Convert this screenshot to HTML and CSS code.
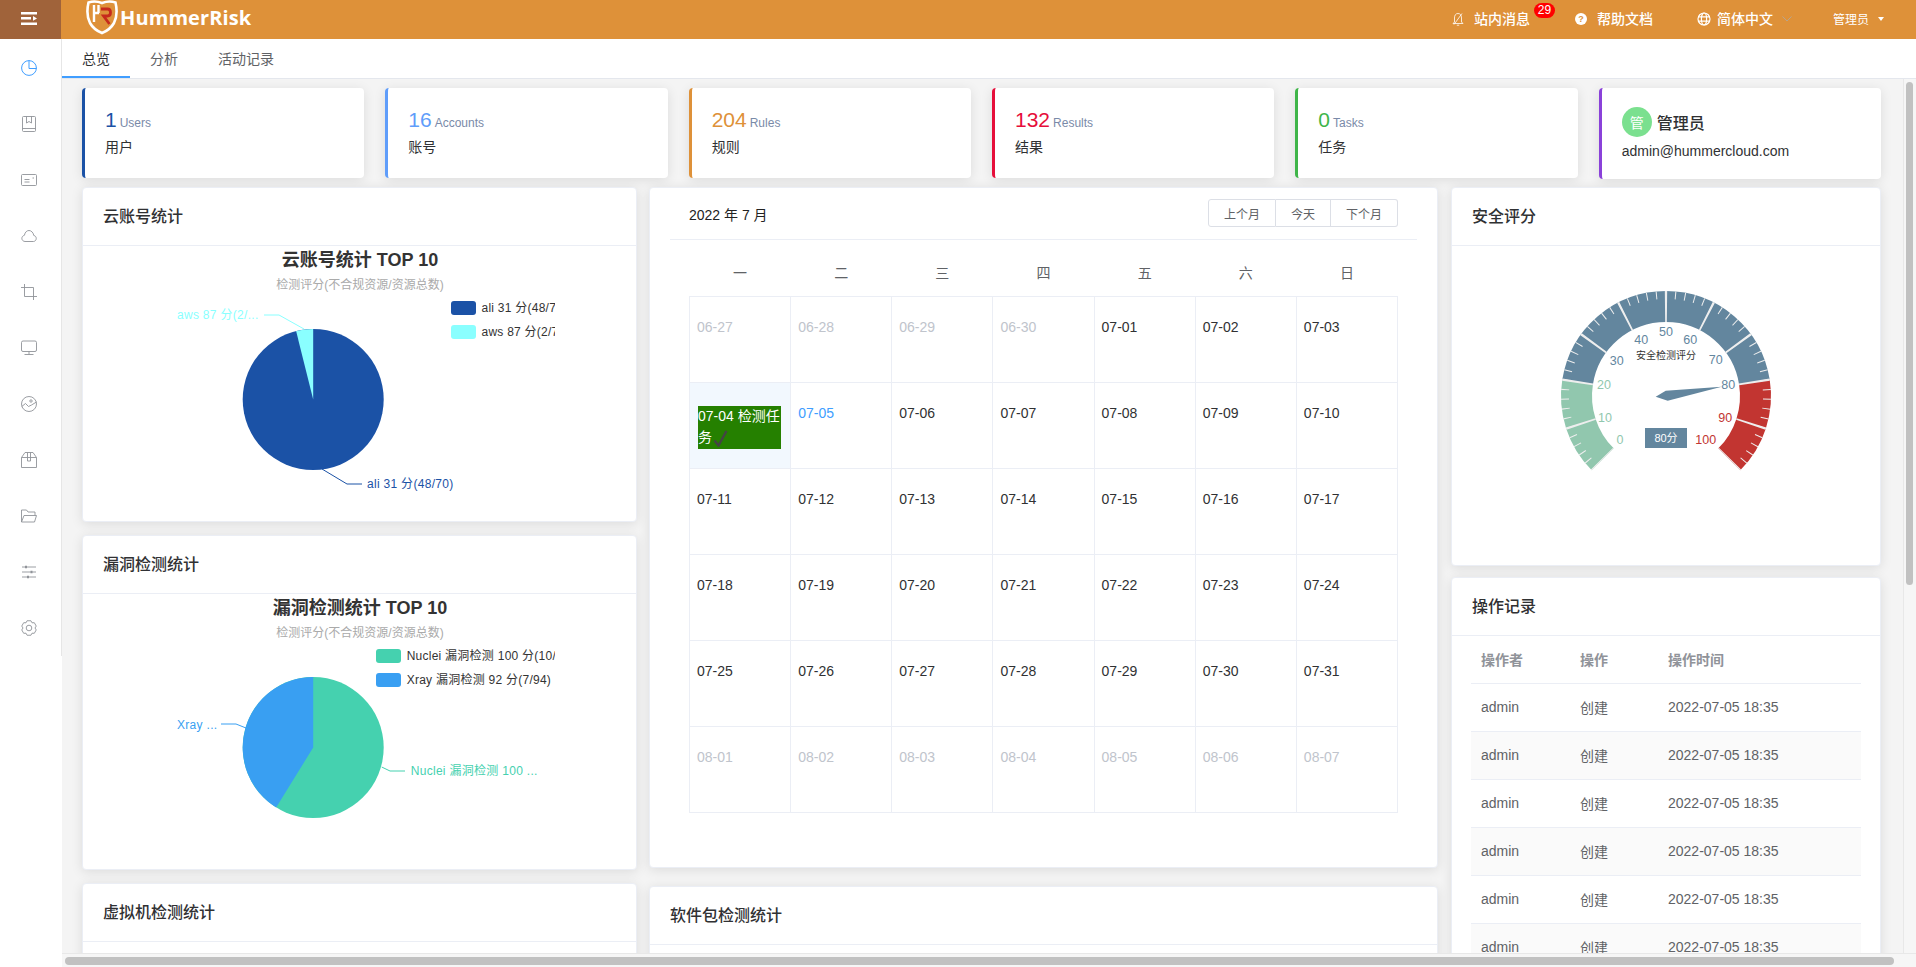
FILE: index.html
```html
<!DOCTYPE html>
<html lang="zh">
<head>
<meta charset="utf-8">
<title>HummerRisk</title>
<link rel="stylesheet" href="styles.css">
</head>
<body>
<header class="topbar">
  <div class="toggle">
    <svg class="toggle-ico" viewBox="0 0 16 13"><path d="M0 0h16v2.500H0zM0 5h10v2.500H0zM0 10.500h16V13H0zM12 4l4 2.400-4 2.400z"/></svg>
  </div>
  <svg class="logo" viewBox="0 0 32 35">
    <path class="logo-w" d="M16 3C12 1.500 7 1 2.500 2.500 1 9 1 17 4 23c2.500 4.500 7 8 12 10 5-2 9.500-5.500 12-10 3-6 3-14 1.500-20.500C25 1 20 1.500 16 3z"/>
    <path class="logo-w logo-h" d="M8 5v17M8 13h5M12.500 5v8"/>
    <path class="logo-r" d="M15 9h6.500c4 0 4 7 0 7h-4l6 8"/>
  </svg>
  <div class="brand">HummerRisk</div>
  <nav class="topnav">
    <span class="nav-item nav-msg">
      <svg class="nav-ico" viewBox="0 0 12 14"><path d="M6 1.500C3.500 1.500 2.500 3.500 2.500 6v4L1 11.500h10L9.500 10V6C9.500 3.500 8.500 1.500 6 1.500zM4.800 13.200h2.400M10 1.500 2 12.500"/></svg>
      <span class="nav-text">站内消息<span class="badge">29</span></span>
    </span>
    <span class="nav-item nav-help">
      <svg class="nav-solid" viewBox="0 0 12 12"><circle cx="6" cy="6" r="6"/><text class="q-mark" x="6" y="9.300">?</text></svg>
      <span class="nav-text">帮助文档</span>
    </span>
    <span class="nav-item nav-lang">
      <svg class="nav-globe" viewBox="0 0 14 14"><circle cx="7" cy="7" r="6"/><ellipse cx="7" cy="7" rx="2.600" ry="6"/><path d="M1 4.800h12M1 9.200h12"/></svg>
      <span class="nav-text">简体中文</span>
      <svg class="nav-chev" viewBox="0 0 10 6"><path d="M.5.500 5 5 9.500.500"/></svg>
    </span>
    <span class="nav-user">管理员<i class="caret"></i></span>
  </nav>
</header>

<div class="shell">
  <aside class="sidebar">
    <div class="menu-item active"><svg class="ico" viewBox="0 0 16 16"><circle cx="8" cy="8" r="7.400"/><path d="M8 .6V8.500H15.400"/></svg></div>
    <div class="menu-item"><svg class="ico" viewBox="0 0 16 16"><rect x="1.500" y=".5" width="13" height="15" rx="1"/><path d="M1.500 12.500h13M5.500.5v6.500L8 5.500 10.500 7V.5"/></svg></div>
    <div class="menu-item"><svg class="ico" viewBox="0 0 16 16"><rect x=".5" y="2.500" width="15" height="11" rx="1"/><path d="M3.500 7.500h5M3.500 10h5M11.500 6h1.500"/></svg></div>
    <div class="menu-item"><svg class="ico" viewBox="0 0 16 16"><path d="M4 13.500h8.500c3.500-.3 3.700-5.500.3-6C12.300 4.300 10 2.500 8 2.500S4 4 3.400 7.300C-.3 8.200.2 13.300 4 13.500z"/></svg></div>
    <div class="menu-item"><svg class="ico" viewBox="0 0 16 16"><path d="M3.500 0v12.500H16M0 3.500h12.500V16"/></svg></div>
    <div class="menu-item"><svg class="ico" viewBox="0 0 16 16"><rect x=".5" y="1" width="15" height="10.500" rx="1.500"/><path d="M8 11.500v3M3.500 14.500h9"/></svg></div>
    <div class="menu-item"><svg class="ico" viewBox="0 0 16 16"><circle cx="8" cy="8" r="7.500"/><path d="M.8 10.500 4.500 7.500 7.500 10.500 10.500 9 15.500 6"/><circle cx="10" cy="5" r="1.200"/></svg></div>
    <div class="menu-item"><svg class="ico" viewBox="0 0 16 16"><path d="M.5 5.500 4 .5h8l3.500 5v10H.5zM.5 5.500h15M6.500.5v8.500h3V.5"/></svg></div>
    <div class="menu-item"><svg class="ico" viewBox="0 0 16 16"><path d="M.5 14V2h5l1.500 2h7v3.500M.5 14 3 7.500h12.500L13.500 14z"/></svg></div>
    <div class="menu-item"><svg class="ico" viewBox="0 0 16 16"><path d="M1 3h14M1 8h14M1 13h14"/><path class="knob" d="M4 1.800h2v2.400H4zM9.500 6.800h2v2.400h-2zM6 11.800h2v2.400H6z"/></svg></div>
    <div class="menu-item"><svg class="ico" viewBox="0 0 16 16"><path d="M9.940.76H6.060L5 2.800 2.700 2.700.76 6.060 2 8 .76 9.940 2.700 13.300 5 13.200 6.060 15.240H9.940L11 13.200 13.300 13.300 15.240 9.940 14 8 15.240 6.060 13.300 2.700 11 2.800z"/><circle cx="8" cy="8" r="2.800"/></svg></div>
  </aside>

  <main class="main">
    <div class="tabs">
      <span class="tab tab-active">总览</span>
      <span class="tab">分析</span>
      <span class="tab">活动记录</span>
    </div>
    <div class="content">
      <section class="stats">
        <div class="stat c-navy"><div class="stat-line"><span class="num">1</span><span class="unit">Users</span></div><div class="stat-name">用户</div></div>
        <div class="stat c-blue"><div class="stat-line"><span class="num">16</span><span class="unit">Accounts</span></div><div class="stat-name">账号</div></div>
        <div class="stat c-orange"><div class="stat-line"><span class="num">204</span><span class="unit">Rules</span></div><div class="stat-name">规则</div></div>
        <div class="stat c-red"><div class="stat-line"><span class="num">132</span><span class="unit">Results</span></div><div class="stat-name">结果</div></div>
        <div class="stat c-green"><div class="stat-line"><span class="num">0</span><span class="unit">Tasks</span></div><div class="stat-name">任务</div></div>
        <div class="stat stat-user c-purple">
          <div class="user-line"><span class="avatar">管</span><span class="user-name">管理员</span></div>
          <div class="user-mail">admin@hummercloud.com</div>
        </div>
      </section>

      <section class="board">
        <div class="col">
          <article class="card chart-card">
            <h3 class="card-head">云账号统计</h3>
            <svg class="chart" viewBox="83 246 553 276">
              <defs><clipPath id="clip1"><rect x="83" y="246" width="472" height="276"/></clipPath></defs>
              <text class="c-title" x="360" y="266">云账号统计 TOP 10</text>
              <text class="c-sub" x="360" y="289">检测评分(不合规资源/资源总数)</text>
              <circle class="f-ali" cx="313.200" cy="399.500" r="70.500"/>
              <path class="f-aws" d="M313.200 399.500 296.100 331.100A70.500 70.500 0 0 1 313.200 329z"/>
              <path class="l-aws" d="M264 315H279L304 329"/>
              <path class="l-ali" d="M322 469 347 484H362"/>
              <text class="lab f-aws" x="177" y="319">aws 87 分(2/...</text>
              <text class="lab f-ali" x="367" y="488">ali 31 分(48/70)</text>
              <rect class="f-ali" x="451" y="301" width="25" height="14" rx="3"/>
              <rect class="f-aws" x="451" y="325" width="25" height="14" rx="3"/>
              <g clip-path="url(#clip1)">
                <text class="leg" x="481.500" y="312">ali 31 分(48/70)</text>
                <text class="leg" x="481.500" y="336">aws 87 分(2/70)</text>
              </g>
            </svg>
          </article>
          <article class="card chart-card">
            <h3 class="card-head">漏洞检测统计</h3>
            <svg class="chart" viewBox="83 594 553 276">
              <defs><clipPath id="clip2"><rect x="83" y="594" width="472" height="276"/></clipPath></defs>
              <text class="c-title" x="360" y="614">漏洞检测统计 TOP 10</text>
              <text class="c-sub" x="360" y="637">检测评分(不合规资源/资源总数)</text>
              <circle class="f-nuc" cx="313.200" cy="747.500" r="70.500"/>
              <path class="f-xray" d="M313.200 747.500 276.150 807.500A70.500 70.500 0 0 1 313.200 677z"/>
              <path class="l-xray" d="M221 724H236L246 728"/>
              <path class="l-nuc" d="M381.700 767 390 771H405"/>
              <text class="lab f-xray" x="177" y="729">Xray ...</text>
              <text class="lab f-nuc" x="410.700" y="775">Nuclei 漏洞检测 100 ...</text>
              <rect class="f-nuc" x="376" y="649" width="25" height="14" rx="3"/>
              <rect class="f-xray" x="376" y="673" width="25" height="14" rx="3"/>
              <g clip-path="url(#clip2)">
                <text class="leg" x="406.700" y="660">Nuclei 漏洞检测 100 分(10/10)</text>
                <text class="leg" x="406.700" y="684">Xray 漏洞检测 92 分(7/94)</text>
              </g>
            </svg>
          </article>
          <article class="card">
            <h3 class="card-head">虚拟机检测统计</h3>
            <div class="card-stub"></div>
          </article>
        </div>

        <div class="col col-mid">
          <article class="card calendar">
            <div class="cal-head">
              <span class="cal-title">2022 年 7 月</span>
              <div class="btn-group"><button class="btn">上个月</button><button class="btn">今天</button><button class="btn">下个月</button></div>
            </div>
            <table class="cal-table">
              <thead><tr><th>一</th><th>二</th><th>三</th><th>四</th><th>五</th><th>六</th><th>日</th></tr></thead>
              <tbody>
                <tr><td class="off">06-27</td><td class="off">06-28</td><td class="off">06-29</td><td class="off">06-30</td><td>07-01</td><td>07-02</td><td>07-03</td></tr>
                <tr><td class="sel"><p class="task">07-04 检测任务<svg class="tick" viewBox="0 0 15 17"><path d="M1.500 10.500 5.500 15.500 13.500 1"/></svg></p></td><td class="today">07-05</td><td>07-06</td><td>07-07</td><td>07-08</td><td>07-09</td><td>07-10</td></tr>
                <tr><td>07-11</td><td>07-12</td><td>07-13</td><td>07-14</td><td>07-15</td><td>07-16</td><td>07-17</td></tr>
                <tr><td>07-18</td><td>07-19</td><td>07-20</td><td>07-21</td><td>07-22</td><td>07-23</td><td>07-24</td></tr>
                <tr><td>07-25</td><td>07-26</td><td>07-27</td><td>07-28</td><td>07-29</td><td>07-30</td><td>07-31</td></tr>
                <tr><td class="off">08-01</td><td class="off">08-02</td><td class="off">08-03</td><td class="off">08-04</td><td class="off">08-05</td><td class="off">08-06</td><td class="off">08-07</td></tr>
              </tbody>
            </table>
          </article>
          <article class="card">
            <h3 class="card-head">软件包检测统计</h3>
            <div class="card-stub"></div>
          </article>
        </div>

        <div class="col col-right">
          <article class="card gauge-card">
            <h3 class="card-head">安全评分</h3>
            <svg class="gauge" viewBox="-214 -150 428 320">
              <path class="g-arc g-green" d="M-63.300 63.300A89.500 89.500 0 0 1-88.400-14"/>
              <path class="g-arc g-blue" d="M-88.400-14A89.500 89.500 0 0 1 88.400-14"/>
              <path class="g-arc g-red" d="M88.400-14A89.500 89.500 0 0 1 63.300 63.300"/>
              <path class="g-ticks" pathLength="270" d="M-71.400 71.400A101 101 0 1 1 71.400 71.400"/>
              <path class="g-splits" pathLength="270" d="M-63.300 63.300A89.500 89.500 0 1 1 63.300 63.300"/>
              <text class="g-lab t-green" x="-46" y="44">0</text>
              <text class="g-lab t-green" x="-61" y="21.700">10</text>
              <text class="g-lab t-green" x="-62" y="-11">20</text>
              <text class="g-lab t-blue" x="-49.300" y="-35.300">30</text>
              <text class="g-lab t-blue" x="-24.700" y="-56">40</text>
              <text class="g-lab t-blue" x="0" y="-64">50</text>
              <text class="g-lab t-blue" x="24.300" y="-56">60</text>
              <text class="g-lab t-blue" x="49.700" y="-35.700">70</text>
              <text class="g-lab t-blue" x="62.300" y="-11">80</text>
              <text class="g-lab t-red" x="59.300" y="21.700">90</text>
              <text class="g-lab t-red" x="39.700" y="44">100</text>
              <text class="g-title" x="0" y="-41">安全检测评分</text>
              <polygon class="g-needle" points="55.700,-9.300 -0.300,-5.300 -10.300,0.700 1.700,4.700"/>
              <rect class="g-needle" x="-21" y="32" width="42" height="20"/>
              <text class="g-val" x="0" y="42">80分</text>
            </svg>
          </article>
          <article class="card">
            <h3 class="card-head">操作记录</h3>
            <div class="log-wrap">
              <table class="log">
                <thead><tr><th>操作者</th><th>操作</th><th>操作时间</th></tr></thead>
                <tbody>
                  <tr><td>admin</td><td>创建</td><td>2022-07-05 18:35</td></tr>
                  <tr><td>admin</td><td>创建</td><td>2022-07-05 18:35</td></tr>
                  <tr><td>admin</td><td>创建</td><td>2022-07-05 18:35</td></tr>
                  <tr><td>admin</td><td>创建</td><td>2022-07-05 18:35</td></tr>
                  <tr><td>admin</td><td>创建</td><td>2022-07-05 18:35</td></tr>
                  <tr><td>admin</td><td>创建</td><td>2022-07-05 18:35</td></tr>
                </tbody>
              </table>
            </div>
          </article>
        </div>
      </section>
    </div>
    <div class="vbar"><div class="vthumb"></div></div>
    <div class="hbar"><div class="hthumb"></div></div>
  </main>
</div>
</body>
</html>
```

FILE: styles.css
```css
* { box-sizing: border-box; }
html, body { margin: 0; height: 100%; overflow: hidden; background: #fff; }
body { font-family: "Liberation Sans", "Noto Sans CJK SC", sans-serif; font-size: 14px; color: #303133; }

/* top bar */
.topbar { display: flex; align-items: center; height: 39px; background: #de9139; color: #fff; overflow: hidden; }
.toggle { display: flex; align-items: center; justify-content: center; width: 61px; height: 100%; background: #a0633a; }
.toggle-ico { width: 16px; height: 13px; fill: #fff; margin-left: -3px; margin-top: -2px; }
.logo { width: 32px; height: 35px; margin-left: 25px; margin-top: -5px; flex: none; }
.logo-w { fill: none; stroke: #fff; stroke-width: 2.6; }
.logo-h { stroke-width: 2.4; }
.logo-r { fill: none; stroke: #c62a1c; stroke-width: 2.8; }
.brand { font-family: "Open Sans", "Liberation Sans", sans-serif; font-weight: 700; font-size: 20px; letter-spacing: .1px; margin-left: 2px; padding-bottom: 5px; }
.topnav { display: flex; align-items: center; margin-left: auto; padding: 0 32px 2px 0; }
.nav-item { display: flex; align-items: center; }
.nav-ico { width: 12px; height: 14px; fill: none; stroke: #fff; stroke-width: .8; margin-right: 10px; }
.nav-solid { width: 12px; height: 12px; fill: #fff; margin-right: 10px; }
.q-mark { fill: #de9139; font-size: 9px; font-weight: 700; text-anchor: middle; }
.nav-globe { width: 14px; height: 14px; fill: none; stroke: #fff; stroke-width: 1.200; margin-right: 6px; }
.nav-chev { width: 10px; height: 6px; fill: none; stroke: #b8a48c; stroke-width: 1; margin-left: 9px; }
.nav-text { position: relative; line-height: 20px; font-weight: 500; }
.nav-msg { margin-right: 45px; }
.nav-help { margin-right: 44px; }
.badge { position: absolute; left: 60px; top: -6px; width: 21px; height: 15px; border-radius: 8px; background: #f00; color: #fff; font-size: 12px; font-weight: 400; line-height: 15px; text-align: center; }
.nav-user { display: flex; align-items: center; font-size: 12px; margin-left: 41px; }
.caret { width: 0; height: 0; margin-left: 9px; border-left: 3px solid transparent; border-right: 3px solid transparent; border-top: 4px solid #fff; }

/* frame */
.shell { display: flex; height: 928px; }
.sidebar { flex: none; width: 62px; height: 617px; padding-top: 1px; background: #fff; border-right: 1px solid #e6e6e6; }
.menu-item { display: flex; align-items: center; justify-content: center; width: 58px; height: 56px; }
.ico { width: 16px; height: 16px; fill: none; stroke: #909399; stroke-width: .9; }
.knob { fill: #909399; stroke: none; }
.active .ico { stroke: #409eff; stroke-width: 1; }

.main { position: relative; flex: 1; min-width: 0; display: flex; flex-direction: column; overflow: hidden; background: #f4f4f4; }
.tabs { display: flex; flex: none; height: 40px; background: #fff; border-bottom: 1px solid #e4e7ed; }
.tab { padding: 0 20px; height: 39px; line-height: 40px; color: #606266; }
.tab-active { color: #303133; border-bottom: 2px solid #409eff; }
.content { flex: 1; min-height: 0; padding: 9px 0 0 20px; overflow: hidden; }

/* stat cards */
.stats { display: grid; grid-template-columns: repeat(6, 1fr); gap: 21px; width: 1799px; align-items: start; }
.stat { height: 90px; padding: 20px 20px 0; background: #fff; border-radius: 4px; border-left: 3px solid; box-shadow: 0 2px 12px rgba(0, 0, 0, .1); }
.stat-line { display: flex; align-items: baseline; height: 24px; line-height: 24px; }
.num { font-size: 21px; margin-right: 3px; }
.unit { font-size: 12px; color: #7a8aa8; }
.stat-name { margin-top: 5px; line-height: 20px; color: #303133; }
.c-navy { border-color: #1b52a6; } .c-navy .num { color: #1b52a6; }
.c-blue { border-color: #5f9dfa; } .c-blue .num { color: #5f9dfa; }
.c-orange { border-color: #de9139; } .c-orange .num { color: #de9139; }
.c-red { border-color: #e60e3a; } .c-red .num { color: #e60e3a; }
.c-green { border-color: #3fb549; } .c-green .num { color: #3fb549; }
.c-purple { border-color: #8a41d9; }
.stat-user { height: 91px; padding-top: 19px; }
.user-line { display: flex; align-items: center; height: 30px; }
.avatar { display: flex; align-items: center; justify-content: center; width: 30px; height: 30px; border-radius: 50%; background: #7be08f; color: #fff; font-size: 14px; }
.user-name { margin-left: 5px; font-size: 16px; font-weight: 500; color: #303133; }
.user-mail { margin-top: 4px; line-height: 20px; color: #303133; }

/* board */
.board { display: grid; grid-template-columns: 555px 790px 430px; column-gap: 12px; margin-top: 8px; width: 1799px; }
.col { display: flex; flex-direction: column; gap: 13px; }
.col-mid { gap: 18px; margin-right: 1px; }
.col-right { gap: 11px; }
.card { flex: none; background: #fff; border: 1px solid #ebeef5; border-radius: 4px; box-shadow: 0 2px 12px rgba(0, 0, 0, .1); overflow: hidden; }
.card-head { margin: 0; height: 58px; padding: 0 20px; border-bottom: 1px solid #ebeef5; font-size: 16px; font-weight: 500; line-height: 57px; color: #303133; }
.card-stub { height: 60px; }
.chart-card { height: 335px; }
.chart { display: block; width: 553px; height: 276px; }
.c-title { font-size: 18px; font-weight: 700; fill: #333; text-anchor: middle; }
.c-sub { font-size: 12px; fill: #aaa; text-anchor: middle; }
.lab { font-size: 12px; letter-spacing: .3px; }
.leg { font-size: 12px; fill: #333; letter-spacing: .25px; }
.f-ali { fill: #1b52a6; }
.f-aws { fill: #8affff; }
.f-nuc { fill: #45d1af; }
.f-xray { fill: #399ff2; }
.l-ali, .l-aws, .l-nuc, .l-xray { fill: none; stroke-width: 1; }
.l-ali { stroke: #1b52a6; }
.l-aws { stroke: #8affff; }
.l-nuc { stroke: #45d1af; }
.l-xray { stroke: #399ff2; }

/* calendar */
.calendar { height: 681px; }
.cal-head { display: flex; align-items: center; justify-content: space-between; margin: 0 20px; height: 52px; padding: 0 19px 0 19px; border-bottom: 1px solid #ebeef5; }
.cal-title { font-size: 14px; color: #222; }
.btn-group { display: flex; margin-top: -1px; }
.btn { height: 28px; padding: 0 15px; border: 1px solid #dcdfe6; border-left-width: 0; background: #fff; color: #606266; font: 12px "Liberation Sans", "Noto Sans CJK SC", sans-serif; }
.btn:first-child { border-left-width: 1px; border-radius: 3px 0 0 3px; }
.btn:last-child { border-radius: 0 3px 3px 0; }
.cal-table { width: 709px; margin-left: 39px; border-collapse: collapse; table-layout: fixed; }
.cal-table th { height: 56px; padding: 9px 0 0; font-weight: 400; color: #606266; text-align: center; }
.cal-table td { height: 86px; padding: 20px 8px 0 7px; border: 1px solid #ebeef5; vertical-align: top; line-height: 21px; overflow: hidden; }
.cal-table .off { color: #c0c4cc; }
.cal-table .today { color: #409eff; }
.cal-table .sel { background: #f2f8fe; }
.task { margin: 3px 0 0 1px; width: 83px; height: 43px; background: #258000; color: #fff; line-height: 21.500px; }
.tick { width: 15px; height: 17px; margin-left: 1px; vertical-align: -5px; fill: none; stroke: #444; stroke-width: 2.400; }

/* gauge */
.gauge-card { height: 379px; }
.gauge { display: block; width: 428px; height: 320px; }
.g-arc { fill: none; stroke-width: 31; }
.g-green { stroke: #91c7ae; }
.g-blue { stroke: #63869e; }
.g-red { stroke: #c23531; }
.g-ticks { fill: none; stroke: #eee; stroke-width: 8; stroke-dasharray: .57 4.830; stroke-dashoffset: .28; }
.g-splits { fill: none; stroke: #eee; stroke-width: 31; stroke-dasharray: 1.280 25.720; stroke-dashoffset: .64; }
.g-lab { font-size: 12.500px; text-anchor: middle; dominant-baseline: central; }
.t-green { fill: #91c7ae; }
.t-blue { fill: #63869e; }
.t-red { fill: #c23531; }
.g-title { font-size: 10px; fill: #333; text-anchor: middle; dominant-baseline: central; }
.g-needle { fill: #63869e; }
.g-val { font-size: 11px; fill: #fff; text-anchor: middle; dominant-baseline: central; }

/* log table */
.log-wrap { padding: 0 19px; }
.log { width: 390px; border-collapse: collapse; table-layout: fixed; }
.log th, .log td { height: 48px; padding: 0 0 0 10px; border-bottom: 1px solid #ebeef5; text-align: left; }
.log th { font-weight: 700; color: #909399; height: 47px; }
.log td { color: #606266; }
.log th:nth-child(1) { width: 99px; }
.log th:nth-child(2) { width: 88px; }
.log tbody tr:nth-child(even) td { background: #fafafa; }

/* scrollbars */
.vbar { position: absolute; right: 0; top: 40px; bottom: 14px; width: 13px; background: #f6f6f6; border-left: 1px solid #e8e8e8; }
.vthumb { position: absolute; left: 2px; top: 3px; width: 7px; height: 503px; border-radius: 4px; background: #c1c1c1; }
.hbar { position: absolute; left: 0; right: 0; bottom: 0; height: 14px; background: #f6f6f6; border-top: 1px solid #e8e8e8; }
.hthumb { position: absolute; left: 3px; top: 3px; width: 1829px; height: 8px; border-radius: 4px; background: #c1c1c1; }
```
